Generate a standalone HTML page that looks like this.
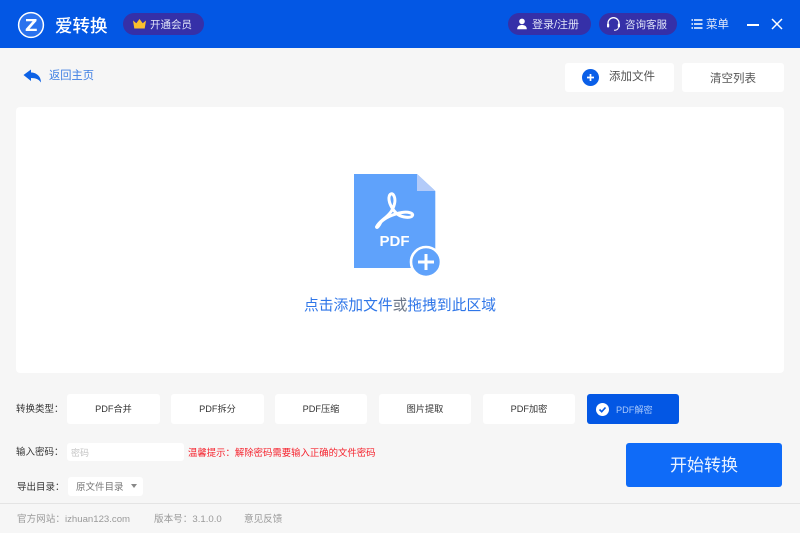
<!DOCTYPE html>
<html lang="zh"><head><meta charset="utf-8">
<style>
html,body{margin:0;padding:0}
body{width:800px;height:533px;overflow:hidden;background:#f6f6f6;position:relative;font-family:"Liberation Sans","Noto Sans CJK SC",sans-serif}
#w{position:absolute;left:0;top:0;width:800px;height:533px;background:#f6f6f6;filter:blur(.35px)}
.a{position:absolute;white-space:nowrap}
.c{display:flex;align-items:center;justify-content:center}
.btn{background:#fff;border-radius:3px;top:394px;width:93px;height:28px;padding-bottom:2px;font-size:9.2px;color:#333}
.pill{background:#3530a8;border-radius:11px;height:22px;top:13px}
.lab{font-size:9.5px;color:#333}
.ft{font-size:9.6px;color:#9a9a9a;top:513px;line-height:13px}
</style></head><body><div id="w">
<div class="a" style="left:0;top:0;width:800px;height:48px;background:#0357e4"></div>
<svg class="a" style="left:16px;top:10px" width="30" height="30" viewBox="0 0 30 30"><circle cx="15" cy="15" r="12.400" fill="#2a72ee" stroke="#fff" stroke-width="1.500"/><path d="M10 9H20.500V11L13.600 18.800H20.800V21H9.700V19L16.600 11.200H10Z" fill="#fff"/></svg>
<div class="a" style="left:55px;top:16px;font-size:17.500px;line-height:20px;color:#fff;font-weight:500">爱转换</div>
<div class="a pill" style="left:123px;width:81px"></div>
<svg class="a" style="left:132px;top:18px" width="15" height="12" viewBox="0 0 15 12"><path d="M1 2.500L4.300 5.200L7.500 1L10.700 5.200L14 2.500L12.700 10.500H2.300Z" fill="#fbc02d"/></svg>
<div class="a" style="left:150px;top:18px;font-size:10.500px;line-height:14px;color:#dfe3f7">开通会员</div>

<div class="a pill" style="left:508px;width:83px"></div>
<svg class="a" style="left:516px;top:18px" width="12" height="12" viewBox="0 0 12 12"><circle cx="6" cy="3.400" r="2.800" fill="#fff"/><path d="M1.200 11.200C1.200 8 3.500 7 6 7S10.800 8 10.800 11.200Z" fill="#fff"/></svg>
<div class="a" style="left:532px;top:18px;font-size:11px;line-height:14px;color:#dfe3f7">登录/注册</div>
<div class="a pill" style="left:599px;width:78px"></div>
<svg class="a" style="left:606px;top:16px" width="15" height="16" viewBox="0 0 15 16"><path d="M2 10V7.200A5.500 5.500 0 0 1 13 7.200V10" fill="none" stroke="#fff" stroke-width="1.300"/><rect x="1" y="7.500" width="2.200" height="4" rx="1" fill="#fff"/><rect x="11.800" y="7.500" width="2.200" height="4" rx="1" fill="#fff"/><path d="M12.500 11.500C12 13.500 10.500 14.300 8 14.300" fill="none" stroke="#fff" stroke-width="1"/></svg>
<div class="a" style="left:625px;top:18px;font-size:10.500px;line-height:14px;color:#dfe3f7">咨询客服</div>
<svg class="a" style="left:691px;top:18px" width="12" height="12" viewBox="0 0 12 12"><path d="M3 2H11.500M3 6H11.500M3 10H11.500" stroke="#fff" stroke-width="1.500"/><path d="M0.500 2H2M0.500 6H2M0.500 10H2" stroke="#fff" stroke-width="1.500"/></svg>
<div class="a" style="left:706px;top:18px;font-size:11.500px;line-height:14px;color:#e6ebfa">菜单</div>
<div class="a" style="left:747px;top:24px;width:12px;height:2px;background:#fff"></div>
<svg class="a" style="left:771px;top:18px" width="12" height="12" viewBox="0 0 12 12"><path d="M1 1L11 11M11 1L1 11" stroke="#fff" stroke-width="1.500"/></svg>

<svg class="a" style="left:23px;top:69px" width="19" height="15" viewBox="0 0 19 15"><path d="M0.500 6L8 0.500V3.500C13 3.500 18 7 18 13.500C16 10.500 13 9 8 9V12Z" fill="#0d62e6"/></svg>
<div class="a" style="left:49px;top:69px;font-size:11.250px;line-height:15px;color:#3f7fe3">返回主页</div>

<div class="a" style="left:565px;top:63px;width:109px;height:29px;background:#fff;border-radius:3px"></div>
<svg class="a" style="left:582px;top:69px" width="17" height="17" viewBox="0 0 17 17"><circle cx="8.500" cy="8.500" r="8.500" fill="#0a5fe8"/><path d="M8.500 5V12M5 8.500H12" stroke="#fff" stroke-width="1.700"/></svg>
<div class="a" style="left:609px;top:70px;font-size:11.500px;line-height:15px;color:#555">添加文件</div>
<div class="a c" style="left:682px;top:63px;width:102px;height:29px;background:#fff;border-radius:3px;font-size:11.500px;color:#555">清空列表</div>

<div class="a" style="left:16px;top:107px;width:768px;height:266px;background:#fff;border-radius:4px"></div>
<svg class="a" style="left:350px;top:170px" width="96" height="110" viewBox="0 0 96 110">
<path d="M4 4H67L85.300 21V98H4Z" fill="#5fa2fb"/>
<path d="M67 4L85.300 21H67Z" fill="#b3cbf9"/>
<path d="M26.500 57C29 51 37 48 41.500 41C45 35 46 29 43.500 25C42 23 39.500 23.500 39 27.500C38.500 33 43 41 48 44.500C52 47.500 61 48.500 62.500 45.500C63.500 43 58 41.500 52 42.500C43 44 35 48 31 52C29 56 27 58.500 26.500 57Z" fill="none" stroke="#fff" stroke-width="3" stroke-linejoin="round"/>
<circle cx="76" cy="92" r="15" fill="#5fa2fb" stroke="#fff" stroke-width="2.600"/>
<path d="M76 84V100M68 92H84" stroke="#fff" stroke-width="3"/>
<text x="44.500" y="76" text-anchor="middle" font-family="Liberation Sans" font-weight="700" font-size="15" fill="#fff">PDF</text>
</svg>
<div class="a" style="left:304px;top:297px;font-size:14.770px;line-height:19px;color:#2f76e8">点击添加文件<span style="color:#6b7688">或</span>拖拽到此区域</div>

<div class="a lab" style="left:16px;top:403px;line-height:14px">转换类型：</div>
<div class="a btn c" style="left:67px">PDF合并</div>
<div class="a btn c" style="left:171px">PDF拆分</div>
<div class="a btn c" style="left:275px;width:92px">PDF压缩</div>
<div class="a btn c" style="left:379px;width:92px">图片提取</div>
<div class="a btn c" style="left:483px;width:92px">PDF加密</div>
<div class="a" style="left:587px;top:394px;width:92px;height:30px;background:#0357e4;border-radius:3px"></div>
<svg class="a" style="left:596px;top:403px" width="13" height="13" viewBox="0 0 13 13"><circle cx="6.500" cy="6.500" r="6.500" fill="#fff"/><path d="M3.500 6.500L5.700 8.700L9.500 4.500" fill="none" stroke="#0357e4" stroke-width="1.600"/></svg>
<div class="a" style="left:616px;top:403px;font-size:9.200px;line-height:14px;color:#a9c8fb">PDF解密</div>

<div class="a lab" style="left:16px;top:446px;line-height:14px">输入密码：</div>
<div class="a" style="left:67px;top:443px;width:117px;height:18px;background:#fff;border-radius:3px"></div>
<div class="a" style="left:71px;top:446px;font-size:9px;line-height:14px;color:#c4c4c4">密码</div>
<div class="a" style="left:188px;top:446px;font-size:9.400px;line-height:14px;color:#f5222d">温馨提示：解除密码需要输入正确的文件密码</div>

<div class="a lab" style="left:17px;top:481px;line-height:14px">导出目录：</div>
<div class="a" style="left:68px;top:477px;width:75px;height:19px;background:#fff;border-radius:3px"></div>
<div class="a" style="left:76px;top:481px;font-size:9.500px;line-height:14px;color:#777">原文件目录</div>
<div class="a" style="left:131px;top:484px;border-left:3.500px solid transparent;border-right:3.500px solid transparent;border-top:4px solid #888"></div>

<div class="a c" style="left:626px;top:443px;width:156px;height:41px;padding-bottom:3px;background:#0f6bf8;border-radius:3px;font-size:17px;color:#eaf2ff">开始转换</div>

<div class="a" style="left:0;top:503px;width:800px;height:1px;background:#e4e4e4"></div>
<div class="a ft" style="left:17px">官方网站：izhuan123.com</div>
<div class="a ft" style="left:154px">版本号：3.1.0.0</div>
<div class="a ft" style="left:244px">意见反馈</div>
</div></body></html>
